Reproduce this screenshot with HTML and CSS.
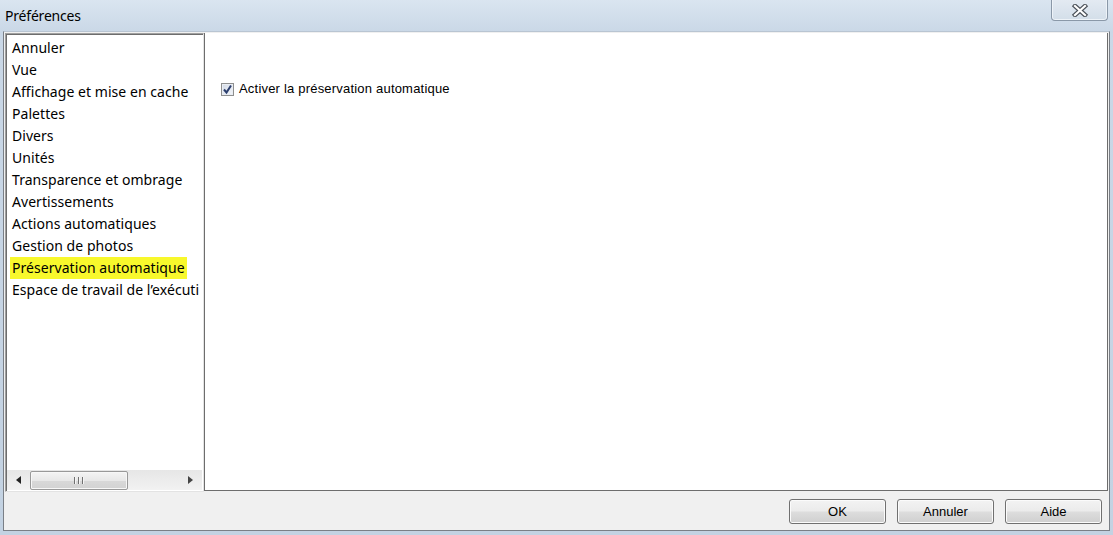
FILE: index.html
```html
<!DOCTYPE html>
<html lang="fr">
<head>
<meta charset="utf-8">
<title>Préférences</title>
<link rel="stylesheet" href="styles.css">
</head>
<body>
<div class="window">
  <div class="titlebar">
    <span class="title">Préférences</span>
    <div class="close">
      <svg width="18" height="13" viewBox="0 0 18 13">
        <path d="M4 2 L14 11 M14 2 L4 11" stroke="#4a5058" stroke-width="4.4" stroke-linecap="square" fill="none"/>
        <path d="M4 2 L14 11 M14 2 L4 11" stroke="#ffffff" stroke-width="2.2" stroke-linecap="square" fill="none"/>
      </svg>
    </div>
  </div>
  <div class="client">
    <div class="main">
      <div class="list">
        <ul class="items">
          <li>Annuler</li>
          <li>Vue</li>
          <li>Affichage et mise en cache</li>
          <li>Palettes</li>
          <li>Divers</li>
          <li>Unités</li>
          <li>Transparence et ombrage</li>
          <li>Avertissements</li>
          <li>Actions automatiques</li>
          <li>Gestion de photos</li>
          <li><span class="hl">Préservation automatique</span></li>
          <li>Espace de travail de l’exécuti</li>
        </ul>
        <div class="hscroll">
          <div class="arrow">
            <svg width="5" height="8" viewBox="0 0 5 8"><path d="M5 0 L0 4 L5 8 Z" fill="#222"/></svg>
          </div>
          <div class="track">
            <div class="thumb">
              <span class="grip"></span><span class="grip"></span><span class="grip"></span>
            </div>
          </div>
          <div class="arrow">
            <svg width="5" height="8" viewBox="0 0 5 8"><path d="M0 0 L5 4 L0 8 Z" fill="#444"/></svg>
          </div>
        </div>
      </div>
      <div class="panel">
        <label class="check">
          <span class="box">
            <svg width="11" height="11" viewBox="0 0 11 11"><path d="M2 5.5 L4.5 8.5 L9 1.5" stroke="#2c3f6e" stroke-width="2" fill="none"/></svg>
          </span>
          <span class="check-label">Activer la préservation automatique</span>
        </label>
      </div>
    </div>
    <div class="footer">
      <button class="btn">OK</button>
      <button class="btn">Annuler</button>
      <button class="btn">Aide</button>
    </div>
  </div>
</div>
</body>
</html>
```

FILE: styles.css
```css
html, body {
  margin: 0;
  padding: 0;
}
body {
  width: 1113px;
  height: 535px;
  overflow: hidden;
  background: #c6d4e3;
}
.window {
  display: flex;
  flex-direction: column;
  height: 535px;
  background: linear-gradient(#dae5f0 0px, #cad8e7 31px, #c3d2e2 535px);
}
.titlebar {
  height: 31px;
  display: flex;
  justify-content: space-between;
  align-items: flex-start;
  padding: 0 5px 0 5px;
}
.title {
  font-family: "Noto Sans", "DejaVu Sans", sans-serif;
  font-size: 14px;
  line-height: 20px;
  padding-top: 6px;
  color: #000;
  letter-spacing: -0.2px;
}
.close {
  width: 55px;
  height: 20px;
  border: 1px solid #8a98a8;
  border-top: none;
  border-radius: 0 0 4px 4px;
  background: linear-gradient(#e3eaf2, #d3dee9);
  box-shadow: inset 0 -1px 0 #eef3f8, inset 1px 0 0 #eef3f8, inset -1px 0 0 #eef3f8;
  display: flex;
  align-items: center;
  justify-content: center;
}
.client {
  margin-left: 3px;
  width: 1105px;
  height: 498px;
  border: 1px solid #7a7f86;
  border-top-color: #b9c5d2;
  background: #f0f0f0;
  display: flex;
  flex-direction: column;
}
.main {
  height: 459px;
  padding: 1px 1px 0 1px;
  display: flex;
}
.list {
  width: 197px;
  height: 457px;
  border: 1px solid #a0a0a0;
  border-right-color: #e3e3e3;
  border-bottom-color: #e3e3e3;
  box-shadow: inset 1px 1px 0 #6d6d6d;
  background: #fff;
  display: flex;
  flex-direction: column;
  overflow: hidden;
}
.items {
  list-style: none;
  margin: 0;
  padding: 3px 0 0 6px;
  flex: 1;
  overflow: hidden;
  white-space: nowrap;
  font-family: "Noto Sans", "DejaVu Sans", sans-serif;
  font-size: 14px;
  line-height: 22px;
  color: #000;
  letter-spacing: 0.05px;
}
.items li {
  height: 22px;
}
.hl {
  background: #f8f82c;
  padding: 0 2px;
  margin-left: -2px;
  display: inline-block;
  height: 22px;
}
.hscroll {
  height: 20px;
  margin: 0 1px 1px 1px;
  display: flex;
  background: linear-gradient(#e6e6e6, #f2f2f2);
}
.arrow {
  width: 23px;
  display: flex;
  align-items: center;
  justify-content: center;
}
.track {
  flex: 1;
  display: flex;
  align-items: center;
}
.thumb {
  width: 96px;
  height: 17px;
  border: 1px solid #999;
  border-radius: 2px;
  background: linear-gradient(#f4f4f4, #e8e8e8 50%, #d9d9d9 51%, #d2d2d2);
  box-shadow: inset 0 0 0 1px #f7f7f7;
  display: flex;
  align-items: center;
  justify-content: center;
  gap: 2px;
}
.grip {
  width: 1px;
  height: 7px;
  background: #707070;
  border-right: 1px solid #f5f5f5;
}
.panel {
  flex: 1;
  height: 458px;
  background: #fff;
  border-left: 1px solid #6d6d6d;
  border-right: 1px solid #6d6d6d;
  border-bottom: 1px solid #6d6d6d;
  padding: 48px 0 0 16px;
  box-sizing: border-box;
}
.check {
  display: flex;
  align-items: center;
  gap: 5px;
  font-family: "Liberation Sans", Arial, sans-serif;
  font-size: 13px;
  line-height: 16px;
  color: #000;
  letter-spacing: 0.2px;
}
.box {
  width: 11px;
  height: 11px;
  border: 1px solid #8e8f8f;
  background: linear-gradient(135deg, #d3dae6, #f3f6fa);
  box-shadow: inset 0 0 0 1px #e9edf3;
  display: flex;
  align-items: center;
  justify-content: center;
}
.footer {
  flex: 1;
  display: flex;
  justify-content: flex-end;
  align-items: flex-start;
  gap: 11px;
  padding: 7px 7px 0 0;
}
.btn {
  width: 97px;
  height: 25px;
  margin: 0;
  border: 1px solid #707070;
  border-radius: 3px;
  background: linear-gradient(#f3f3f3, #ebebeb 48%, #dddddd 52%, #cfcfcf);
  box-shadow: inset 0 0 0 1px #fbfbfb;
  font-family: "Liberation Sans", Arial, sans-serif;
  font-size: 13px;
  color: #000;
  padding: 0;
}
```
